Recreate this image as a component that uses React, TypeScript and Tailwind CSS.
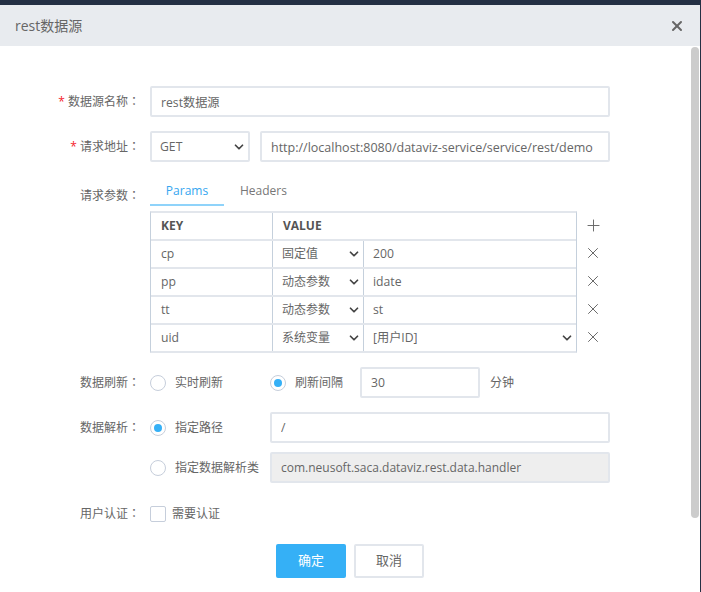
import { ChevronDown, Plus, X } from 'lucide-react'

const font = { fontFamily: '"Open Sans", "Noto Sans CJK SC", sans-serif' }

const inputCls =
  'h-[31px] rounded-[2px] border-2 border-[#e2e6ec] px-[9px] text-[12.2px] text-[#666] outline-none'

const Label = ({ text, required }: { text: string; required?: boolean }) => (
  <div className="w-[150px] shrink-0 pr-[10px] text-right text-[12px] text-[#666]">
    {required && <span className="mr-[3px] text-[#f5222d]">*</span>}
    {text}
    <span className="font-['Noto_Sans_CJK_TC']">：</span>
  </div>
)

const Radio = ({ checked, label, w }: { checked?: boolean; label: string; w: string }) => (
  <div className={`flex items-center ${w}`}>
    <span className="mr-[9px] flex h-[16px] w-[16px] items-center justify-center rounded-full border border-[#c6cedb] bg-white">
      {checked && <span className="h-[8px] w-[8px] rounded-full bg-[#35b0f6]" />}
    </span>
    <span className="text-[12px] text-[#666]">{label}</span>
  </div>
)

const Caret = () => <ChevronDown size={14} strokeWidth={3} className="shrink-0 text-[#444]" />

const rows = [
  { key: 'cp', type: '固定值', value: '200' },
  { key: 'pp', type: '动态参数', value: 'idate' },
  { key: 'tt', type: '动态参数', value: 'st' },
  { key: 'uid', type: '系统变量', value: '[用户ID]', select: true },
]

export default function App() {
  return (
    <div className="h-[592px] w-[701px] overflow-hidden bg-[#243044] pt-[5px] pr-[1px]" style={font}>
      <div className="flex h-[41px] items-center justify-between bg-[#e8ebef] pr-[15px] pl-[15px]">
        <span className="text-[14px] text-[#666]">rest数据源</span>
        <X size={16} strokeWidth={3} className="text-[#666]" />
      </div>

      <div className="flex h-[546px] bg-white">
        <div className="w-[691px] shrink-0 pt-[40px]">
          <div className="flex items-center">
            <Label text="数据源名称" required />
            <input readOnly value="rest数据源" className={`${inputCls} w-[460px] bg-white`} />
          </div>

          <div className="mt-[14px] flex items-center">
            <Label text="请求地址" required />
            <div className={`${inputCls} flex w-[100px] items-center justify-between bg-white pt-[1px] pr-[2px]`}>
              <span className="-ml-[1px]">GET</span>
              <Caret />
            </div>
            <input
              readOnly
              value="http://localhost:8080/dataviz-service/service/rest/demo"
              className={`${inputCls} ml-[10px] w-[350px] bg-white pt-[1px] text-[12.5px]`}
            />
          </div>

          <div className="mt-[16px] flex">
            <div className="pt-[8px]">
              <Label text="请求参数" />
            </div>
            <div>
              <div className="flex h-[28px] items-end text-[12px]">
                <div className="flex h-[28px] w-[74px] items-center justify-center border-b-2 border-[#8fd3fa] text-[#35a6f0]">
                  Params
                </div>
                <div className="ml-[16px] flex h-[28px] items-center pb-[2px] text-[#777]">Headers</div>
              </div>

              <div className="mt-[5px] flex items-start">
                <div className="w-[427px] border-x border-y-2 border-x-[#c5d0dc] border-y-[#e2e6ec] text-[12.2px] text-[#666]">
                  <div className="flex h-[26px] items-center text-[12px] font-bold text-[#555]">
                    <div className="flex h-full w-[122px] items-center border-r border-[#c5d0dc] pl-[10px]">KEY</div>
                    <div className="pl-[10px]">VALUE</div>
                  </div>
                  {rows.map((r) => (
                    <div key={r.key} className="flex h-[28px] items-center border-t-2 border-[#e2e6ec]">
                      <div className="flex h-full w-[122px] items-center border-r border-[#c5d0dc] pl-[10px]">{r.key}</div>
                      <div className="flex h-full w-[91px] items-center justify-between border-r border-[#c5d0dc] pr-[2px] pl-[9px] text-[12px]">
                        <span>{r.type}</span>
                        <Caret />
                      </div>
                      <div className="flex h-full flex-1 items-center justify-between pr-[2px] pl-[9px]">
                        <span>{r.value}</span>
                        {r.select && <Caret />}
                      </div>
                    </div>
                  ))}
                </div>

                <div className="ml-[5px] w-[22px] text-[#666]">
                  <div className="flex h-[28px] items-center justify-center">
                    <Plus size={19} strokeWidth={1.2} />
                  </div>
                  {rows.map((r) => (
                    <div key={r.key} className="flex h-[28px] items-center justify-center">
                      <X size={18} strokeWidth={1.3} />
                    </div>
                  ))}
                </div>
              </div>
            </div>
          </div>

          <div className="mt-[14px] flex items-center">
            <Label text="数据刷新" />
            <Radio label="实时刷新" w="w-[120px]" />
            <Radio checked label="刷新间隔" w="w-[90px]" />
            <input readOnly value="30" className={`${inputCls} w-[120px] bg-white`} />
            <span className="ml-[10px] text-[12px] text-[#666]">分钟</span>
          </div>

          <div className="mt-[14px] flex items-center">
            <Label text="数据解析" />
            <Radio checked label="指定路径" w="w-[120px]" />
            <input readOnly value="/" className={`${inputCls} w-[340px] bg-white`} />
          </div>

          <div className="mt-[9px] flex items-center">
            <div className="w-[150px] shrink-0" />
            <Radio label="指定数据解析类" w="w-[120px]" />
            <input
              readOnly
              value="com.neusoft.saca.dataviz.rest.data.handler"
              className={`${inputCls} w-[340px] bg-[#eeeeee] text-[12px]`}
            />
          </div>

          <div className="mt-[21px] flex items-center">
            <Label text="用户认证" />
            <span className="mr-[6px] h-[16px] w-[16px] rounded-[2px] border border-[#c6cedb] bg-white" />
            <span className="text-[12px] text-[#666]">需要认证</span>
          </div>

          <div className="mt-[21px] flex pl-[276px]">
            <div className="flex h-[34px] w-[70px] items-center justify-center rounded-[2px] bg-[#35b0f6] text-[13px] text-white">
              确定
            </div>
            <div className="ml-[8px] flex h-[34px] w-[70px] items-center justify-center rounded-[2px] border-2 border-[#e2e6ec] text-[13px] text-[#666]">
              取消
            </div>
          </div>
        </div>

        <div className="mt-[1px] h-[471px] w-[8px] rounded-[4px] bg-[#cccccc]" />
      </div>
    </div>
  )
}
